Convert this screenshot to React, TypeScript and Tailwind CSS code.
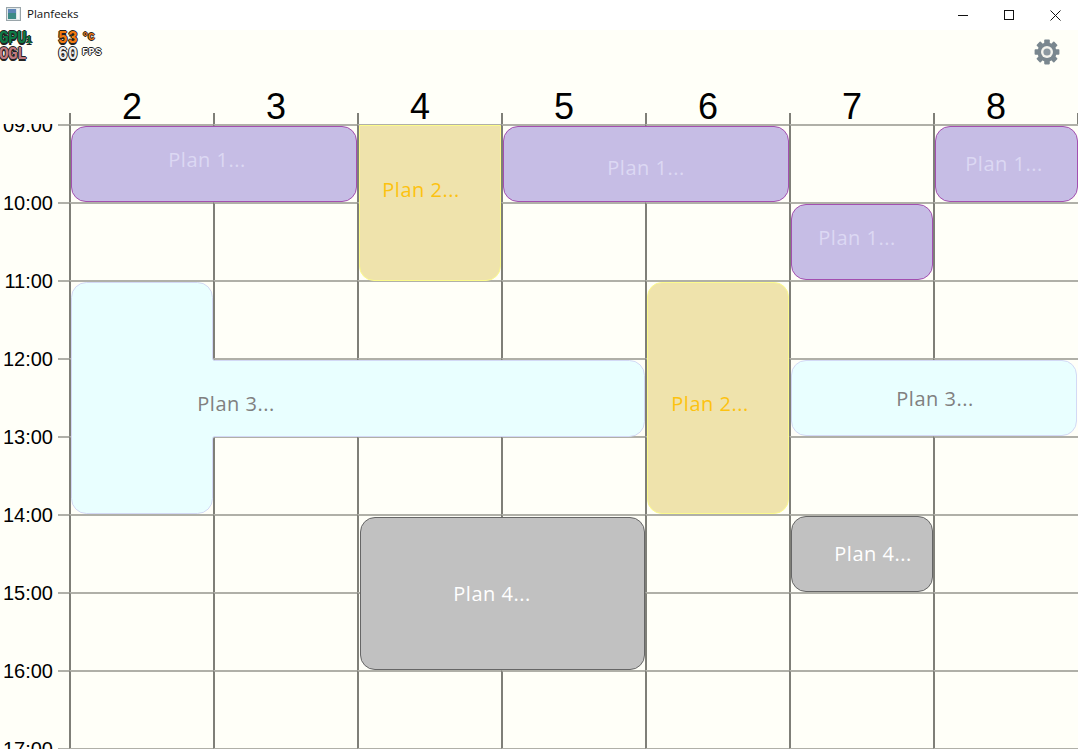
import React from "react";

const hours = ["09:00", "10:00", "11:00", "12:00", "13:00", "14:00", "15:00", "16:00", "17:00"];
const days = ["2", "3", "4", "5", "6", "7", "8"];
const columns = "grid grid-cols-[69px_repeat(6,144px)_145px]";

const purple = "bg-[#c6bde5] border border-[#a34fb0] text-[#dcd8f3] rounded-[15px]";
const yellow = "bg-[#efe3ac] border border-[#fdfc8c] text-[#fdc210] rounded-[15px]";
const cyan = "bg-[#e9ffff] border border-[#d3d9f5] text-[#808080] rounded-[15px]";
const gray = "bg-[#c1c1c1] border border-[#666666] text-white rounded-[15px]";
const planText = "font-['Open_Sans',sans-serif] text-[20px] tracking-[0.5px]";

const events = [
  { label: "Plan 1...", cls: `col-start-2 col-span-2 row-start-1 ml-[2px] mt-[2px] pr-[14px] pb-[8px] ${purple}` },
  { label: "Plan 2...", cls: `col-start-4 row-start-1 row-span-2 ml-[2px] mt-px -mb-px pr-[18px] pb-[26px] rounded-t-none ${yellow}` },
  { label: "Plan 1...", cls: `col-start-5 col-span-2 row-start-1 ml-[2px] mt-[2px] pt-[8px] ${purple}` },
  { label: "Plan 1...", cls: `col-start-8 row-start-1 ml-[2px] mt-[2px] pr-[5px] ${purple}` },
  { label: "Plan 1...", cls: `col-start-7 row-start-2 ml-[2px] mt-[2px] pr-[10px] pb-[8px] ${purple}` },
  { label: "Plan 2...", cls: `col-start-6 row-start-3 row-span-3 ml-[2px] mt-[2px] pr-[16px] pt-[12px] ${yellow}` },
  { label: "Plan 3...", cls: `col-start-7 col-span-2 row-start-4 ml-[2px] mr-px mt-[2px] pt-[2px] pl-[2px] ${cyan}` },
  { label: "Plan 4...", cls: `col-start-4 col-span-2 row-start-6 row-span-2 ml-[3px] mt-[3px] pr-[21px] ${gray}` },
  { label: "Plan 4...", cls: `col-start-7 row-start-6 ml-[2px] mt-[2px] pl-[22px] ${gray}` },
];

function Gear() {
  const teeth = [0, 45, 90, 135, 180, 225, 270, 315];
  return (
    <svg width="26" height="26" viewBox="0 0 26 26" className="mt-[9px] mr-[18px]">
      {teeth.map((a) => (
        <rect key={a} x="10.2" y="0.6" width="5.6" height="6" rx="0.8" fill="#7a878f" transform={`rotate(${a} 13 13)`} />
      ))}
      <circle cx="13" cy="13" r="9.6" fill="#7a878f" />
      <circle cx="13" cy="13" r="6" fill="#f4f4ee" />
      <circle cx="13" cy="13" r="3.6" fill="#8c98a0" />
    </svg>
  );
}

function WindowControls() {
  return (
    <div className="flex h-full items-center">
      <div className="flex w-[46px] justify-center">
        <svg width="10" height="10" viewBox="0 0 10 10"><path d="M0 5.5H10" stroke="#111" /></svg>
      </div>
      <div className="flex w-[46px] justify-center">
        <svg width="10" height="10" viewBox="0 0 10 10"><rect x="0.5" y="0.5" width="9" height="9" fill="none" stroke="#111" /></svg>
      </div>
      <div className="flex w-[46px] justify-center">
        <svg width="11" height="11" viewBox="0 0 11 11"><path d="M0.5 0.5L10.5 10.5M10.5 0.5L0.5 10.5" stroke="#111" /></svg>
      </div>
    </div>
  );
}

const pixel = "font-['Liberation_Mono',monospace] font-bold leading-none [text-shadow:1px_0_0_#222,-1px_0_0_#222,0_1px_0_#222,0_-1px_0_#222]";

function Stats() {
  return (
    <div className="grid h-fit grid-cols-[58px_24px_auto] grid-rows-[16px_16px] items-center pt-[1px]">
      <div className={`${pixel} origin-left -ml-px scale-y-110 text-[16px] tracking-[-0.6px] text-[#0e7a46]`}>
        GPU<span className="text-[10px]">1</span>
      </div>
      <div className={`${pixel} scale-y-110 text-[16px] tracking-[0.5px] text-[#f07a10]`}>53</div>
      <div className={`${pixel} -mt-[4px] text-[11px] tracking-[-0.5px] text-[#f07a10]`}>°C</div>
      <div className={`${pixel} origin-left -ml-px scale-y-110 text-[16px] tracking-[-0.6px] text-[#c07a80]`}>OGL</div>
      <div className={`${pixel} scale-y-110 text-[16px] tracking-[0.5px] text-[#eeeeee]`}>60</div>
      <div className={`${pixel} -mt-[4px] text-[10px] tracking-[0.6px] text-white`}>FPS</div>
    </div>
  );
}

export default function App() {
  return (
    <div className="flex h-[749px] w-[1078px] flex-col overflow-hidden bg-[#fffff8] font-['Liberation_Sans',sans-serif] text-black">
      <div className="flex h-[30px] shrink-0 items-center justify-between bg-white pl-[6px]">
        <div className="flex items-center gap-[6px] pb-[2px]">
          <svg width="15" height="14" viewBox="0 0 15 14">
            <rect x="0.5" y="0.5" width="14" height="13" fill="#dfe7ea" stroke="#9aa5aa" />
            <rect x="2" y="2" width="8" height="10" fill="#3d8a86" />
            <rect x="2" y="2" width="8" height="4" fill="#5f86b8" />
            <rect x="11" y="2" width="2" height="10" fill="#f6f8f8" />
          </svg>
          <span className="font-['Open_Sans',sans-serif] text-[11.5px] leading-none text-[#111]">Planfeeks</span>
        </div>
        <WindowControls />
      </div>

      <div className="flex h-[94px] shrink-0 flex-col justify-between">
        <div className="flex justify-between">
          <Stats />
          <Gear />
        </div>
        <div className={`${columns} h-[11px]`}>
          <div />
          {days.map((d, i) => (
            <div key={d} className={`flex justify-center border-l-2 border-[#7f7f78] pr-[20px] ${i === 6 ? "border-r" : ""}`}>
              <span className="-mt-[24px] h-[36px] text-[36px] leading-none">{d}</span>
            </div>
          ))}
        </div>
      </div>

      <div className={`${columns} min-h-0 flex-1 auto-rows-[78px] overflow-hidden`}>
        {hours.map((h, r) => (
          <React.Fragment key={h}>
            <div className="flex justify-between" style={{ gridColumn: 1, gridRow: r + 1 }}>
              <div className="h-[24px] w-[54px] shrink-0 -translate-y-[11px] pr-px text-right text-[20px] leading-[24px]">{h}</div>
              <div className="h-[2px] w-[11px] bg-[#b0b0a8]" />
            </div>
            {days.map((d, c) => (
              <div
                key={d}
                className="border-l-2 border-t-2 border-[#7f7f78] border-t-[#b0b0a8]"
                style={{ gridColumn: c + 2, gridRow: r + 1 }}
              />
            ))}
          </React.Fragment>
        ))}

        <div className={`relative col-start-2 col-span-4 row-start-3 row-span-3 ml-[2px] mt-[2px] flex items-center justify-center pr-[244px] pt-[12px] text-[#808080] ${planText}`}>
          <svg viewBox="0 0 574 232" className="absolute inset-0 h-full w-full">
            <path
              d="M15.5 .5H126.5A15 15 0 0 1 141.5 15.5V76Q141.5 78.5 144 78.5H558.5A15 15 0 0 1 573.5 93.5V139.5A15 15 0 0 1 558.5 154.5H144Q141.5 154.5 141.5 157V216.5A15 15 0 0 1 126.5 231.5H15.5A15 15 0 0 1 .5 216.5V15.5A15 15 0 0 1 15.5 .5Z"
              fill="#e9ffff"
              stroke="#d3d9f5"
            />
          </svg>
          <span className="relative">Plan 3...</span>
        </div>

        {events.map((e, i) => (
          <div key={i} className={`flex items-center justify-center ${planText} ${e.cls}`}>
            {e.label}
          </div>
        ))}
      </div>
    </div>
  );
}
